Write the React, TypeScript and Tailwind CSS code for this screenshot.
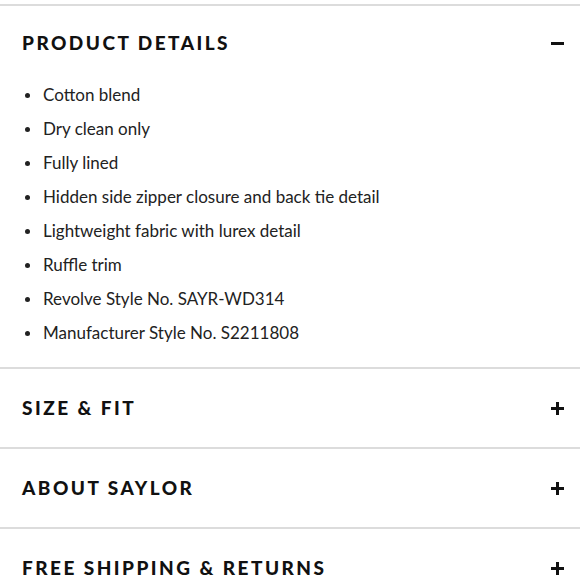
import React from "react";

const items = [
  "Cotton blend",
  "Dry clean only",
  "Fully lined",
  "Hidden side zipper closure and back tie detail",
  "Lightweight fabric with lurex detail",
  "Ruffle trim",
  "Revolve Style No. SAYR-WD314",
  "Manufacturer Style No. S2211808",
];

function Plus() {
  return (
    <div className="relative h-[13px] w-[13px]">
      <div className="absolute left-0 top-[5px] h-[3px] w-[13px] bg-[#111]" />
      <div className="absolute left-[5px] top-0 h-[13px] w-[3px] bg-[#111]" />
    </div>
  );
}

function Minus() {
  return <div className="h-[3px] w-[13px] bg-[#111]" />;
}

function Header({ title }: { title: string }) {
  return (
    <div className="flex h-[78px] items-center justify-between pl-[22px] pr-[16px]">
      <span className="text-[19px] font-black tracking-[0.13em] text-[#111]">{title}</span>
      <Plus />
    </div>
  );
}

export default function App() {
  return (
    <div className="h-[580px] w-[580px] overflow-hidden bg-white pt-[4px]" style={{ fontFamily: "Lato, 'Noto Sans', sans-serif" }}>
      <div className="border-t-2 border-[#dcdcdc]">
        <div className="flex h-[72px] items-center justify-between pl-[22px] pr-[16px] pt-[3px]">
          <span className="text-[19px] font-black tracking-[0.13em] text-[#111]">PRODUCT DETAILS</span>
          <Minus />
        </div>
        <ul className="pb-[17px]">
          {items.map((t) => (
            <li key={t} className="flex h-[34px] items-center pl-[25px] text-[17px] text-[#222]">
              <span className="mr-[13px] h-[5px] w-[5px] rounded-full bg-[#222]" />
              {t}
            </li>
          ))}
        </ul>
      </div>
      <div className="border-t-2 border-[#dcdcdc]">
        <Header title="SIZE & FIT" />
      </div>
      <div className="border-t-2 border-[#dcdcdc]">
        <Header title="ABOUT SAYLOR" />
      </div>
      <div className="border-t-2 border-[#dcdcdc]">
        <Header title="FREE SHIPPING & RETURNS" />
      </div>
    </div>
  );
}
